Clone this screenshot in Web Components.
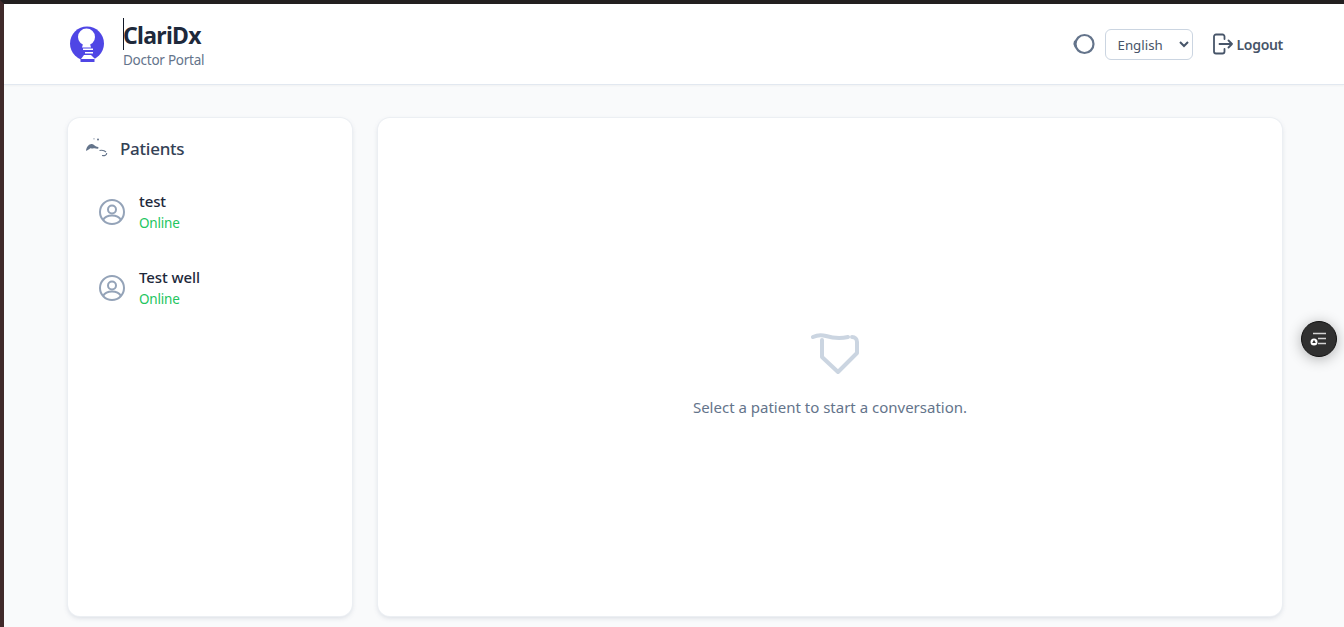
<!DOCTYPE html>
<html lang="en">
<head>
<meta charset="utf-8">
<title>ClariDx</title>
<style>
  html, body { margin: 0; height: 100%; overflow: hidden; }
  body { font-family: "Noto Sans", "Open Sans", sans-serif; background: #f9fafb; color: #1e293b; }
</style>
</head>
<body>
<doctor-app>
  <portal-header slot="header"></portal-header>
  <patient-list slot="side">
    <patient-row name="test"></patient-row>
    <patient-row name="Test well"></patient-row>
  </patient-list>
  <chat-empty slot="main">Select a patient to start a conversation.</chat-empty>
</doctor-app>
<float-button></float-button>

<script>
;(function () {
  function define (name, html, setup) {
    customElements.define(name, class extends HTMLElement {
      constructor () {
        super()
        this.attachShadow({ mode: 'open' }).innerHTML = html
        if (setup) setup(this)
      }
    })
  }

  define('doctor-app', `
<style>
  :host {
    display: flex;
    flex-direction: column;
    box-sizing: border-box;
    height: 627px;
    border-top: 4px solid #231f20;
    border-left: 4px solid #402a2a;
  }
  main {
    flex: 1;
    min-height: 0;
    display: flex;
    gap: 26px;
    padding: 33px 62px 11px 64px;
  }
</style>
<slot name="header"></slot>
<main>
  <slot name="side"></slot>
  <slot name="main"></slot>
</main>`)

  define('portal-header', `
<style>
  :host {
    display: flex;
    align-items: center;
    flex: none;
    box-sizing: border-box;
    height: 81px;
    padding: 0 61px 0 66px;
    background: #fff;
    border-bottom: 1px solid #e2e8f0;
    box-shadow: 0 1px 2px rgba(0, 0, 0, .04);
  }
  .logo { width: 34px; height: 38px; flex: none; margin-right: 19px; }
  .brand { flex: 1; display: flex; flex-direction: column; }
  .title {
    font-size: 23px;
    line-height: 34px;
    font-weight: 700;
    color: #1e293b;
    letter-spacing: -.7px;
    border-left: 1px solid #111827;
    margin-top: -2px;
    width: max-content;
    height: 32px;
  }
  .title span { margin-left: -1px; }
  .sub { font-size: 13.500px; line-height: 18px; margin-top: 1px; color: #64748b; letter-spacing: -.25px; }
  .sync { width: 24px; height: 24px; margin-right: 9px; }
  select {
    width: 88px;
    height: 31px;
    font: 13.300px "Noto Sans", "Open Sans", sans-serif;
    color: #475569;
    background: #fff;
    border: 1px solid #cbd5e1;
    border-radius: 6px;
    padding: 2px 0 0 8px;
    margin-right: 20px;
  }
  .logout {
    display: flex;
    align-items: center;
    gap: 4px;
    font-size: 14px;
    font-weight: 600;
    color: #475569;
    letter-spacing: -.3px;
  }
  .logout svg { width: 20px; height: 22px; }
</style>
<svg class="logo" viewBox="0 0 34 38">
  <circle cx="17" cy="18.500" r="17" fill="#4f46e5"/>
  <circle cx="16.500" cy="12" r="8.500" fill="#fff"/>
  <path d="M13 19h7l1 3.500h-9z" fill="#fff"/>
  <path d="M13 23.500h10v1.500H13z" fill="#fff"/>
  <path d="M15 27h8v1.500h-8z" fill="#fff"/>
  <path d="M14 30h7l4 4H11z" fill="#fff"/>
  <path d="M10.500 34h14v3h-14z" fill="#5046e5"/>
</svg>
<div class="brand">
  <div class="title"><span>ClariDx</span></div>
  <div class="sub">Doctor Portal</div>
</div>
<svg class="sync" viewBox="0 0 24 24" fill="none" stroke="#64748b" stroke-width="2.200">
  <circle cx="12.500" cy="12" r="9"/>
  <path d="M3 9.500 2.500 12 3.500 14.500" stroke-linecap="round"/>
</svg>
<select><option>English</option></select>
<div class="logout">
  <svg viewBox="0 0 20 22" fill="none" stroke="#475569" stroke-width="1.800" stroke-linecap="round" stroke-linejoin="round">
    <path d="M11.500 6V3.500A2 2 0 0 0 9.500 1.500H3A2 2 0 0 0 1 3.500v15a2 2 0 0 0 2 2h6.500a2 2 0 0 0 2-2V16"/>
    <path d="M6.500 11H19M15.500 7.500 19 11l-3.500 3.500"/>
  </svg>
  <span>Logout</span>
</div>`)

  define('patient-list', `
<style>
  :host {
    display: block;
    box-sizing: border-box;
    flex: none;
    width: 284px;
    height: 498px;
    padding: 16px;
    background: #fff;
    border-radius: 12px;
    box-shadow: 0 0 0 1px #eceff3, 0 2px 5px rgba(100, 116, 139, .22);
  }
  h2 {
    display: flex;
    align-items: center;
    gap: 12px;
    margin: 0 0 12px;
    height: 28px;
    font-size: 17px;
    font-weight: 500;
    color: #334155;
    letter-spacing: -.25px;
  }
  svg { width: 23px; height: 20px; margin-left: 1px; }
</style>
<h2>
  <svg viewBox="0 0 23 20" fill="#64748b">
    <circle cx="13" cy="1.500" r="1"/>
    <circle cx="9" cy=".8" r=".6"/>
    <path d="M1 12.500C1.500 8.500 4.500 5.500 7 6c2 .5 3 2.500 6 3 1 .3 .5 2-.5 1.700C10 10 9 10 8 10.500c-1 .5-2-1-3 0-1 .8-4 3-4 2z"/>
    <path d="M14.500 12.500c2-.5 5 0 6.500 1.500M17 17.500c2.500 .5 5-.5 4.700-2.500" fill="none" stroke="#64748b" stroke-width="1.100"/>
  </svg>
  Patients
</h2>
<slot></slot>`)

  define('patient-row', `
<style>
  :host {
    display: flex;
    align-items: center;
    gap: 14px;
    height: 76px;
    padding-left: 14px;
    box-sizing: border-box;
  }
  svg { width: 28px; height: 28px; flex: none; }
  .text { margin-left: -1px; }
  .name { font-size: 15px; line-height: 20px; font-weight: 500; color: #1e293b; letter-spacing: -.1px; }
  .status { font-size: 13.500px; line-height: 20px; color: #22c55e; margin-top: 2px; letter-spacing: -.2px; }
</style>
<svg viewBox="0 0 28 28" fill="none" stroke="#94a3b8" stroke-width="2">
  <circle cx="14" cy="14" r="12"/>
  <circle cx="14" cy="11.500" r="4"/>
  <path d="M5 22c2-3.500 5.500-4.500 9-4.500s7 1 9 4.500"/>
</svg>
<div class="text">
  <div class="name"></div>
  <div class="status">Online</div>
</div>`, el => {
    el.shadowRoot.querySelector('.name').textContent = el.getAttribute('name')
  })

  define('chat-empty', `
<style>
  :host {
    display: flex;
    flex-direction: column;
    align-items: center;
    justify-content: center;
    box-sizing: border-box;
    flex: 1;
    min-width: 0;
    height: 498px;
    padding-top: 16px;
    background: #fff;
    border-radius: 12px;
    box-shadow: 0 0 0 1px #eceff3, 0 2px 5px rgba(100, 116, 139, .22);
    font-size: 15px;
    line-height: 22px;
    color: #64748b;
  }
  svg { width: 50px; height: 42px; margin: 0 0 21px 10px; display: block; }
</style>
<svg viewBox="0 0 50 42" fill="none" stroke="#cbd5e1" stroke-width="4" stroke-linecap="round" stroke-linejoin="round">
  <path d="M3 4C7 2 11 1.500 16 3s13 3 22 1"/>
  <path d="M42 4c3 0 5 2 5 5v11L28 39 12 24V7"/>
</svg>
<div><slot></slot></div>`)

  define('float-button', `
<style>
  :host {
    position: fixed;
    left: 1301px;
    top: 321px;
    width: 36px;
    height: 36px;
    box-sizing: border-box;
    border-radius: 50%;
    background: #303030;
    border: 1px solid #111;
    box-shadow: 0 2px 14px rgba(0, 0, 0, .3);
    display: flex;
    align-items: center;
    justify-content: center;
  }
  svg { width: 18px; height: 14px; }
</style>
<svg viewBox="0 0 18 14" fill="none" stroke="#d4d4d4" stroke-width="1.300">
  <path d="M3 1.500h13M8 6.500h8M8 11.500h8"/>
  <circle cx="4" cy="10" r="3.500" fill="#fff" stroke="none"/>
  <path d="M4 7.800 5.800 11H2.200z" fill="#303030" stroke="none"/>
</svg>`)
})()
</script>
</body>
</html>
